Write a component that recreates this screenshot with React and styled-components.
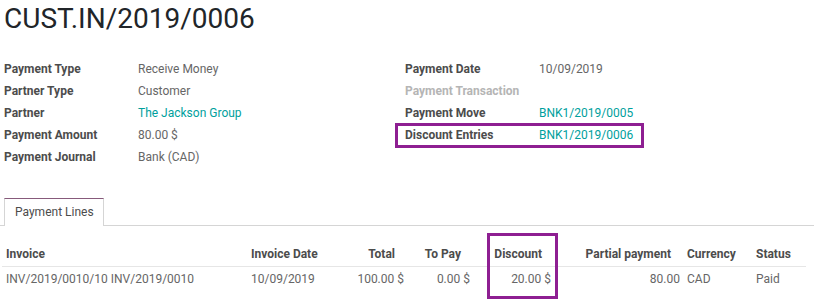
import React from 'react';
import styled, { createGlobalStyle } from 'styled-components';

const GlobalStyle = createGlobalStyle`
  body {
    margin: 0;
    background: #ffffff;
    font-family: Roboto, "Liberation Sans", sans-serif;
    font-size: 12px;
    color: #666666;
  }
`;

const leftFields = [
  { label: 'Payment Type', value: 'Receive Money' },
  { label: 'Partner Type', value: 'Customer' },
  { label: 'Partner', value: 'The Jackson Group', link: true },
  { label: 'Payment Amount', value: '80.00 $' },
  { label: 'Payment Journal', value: 'Bank (CAD)' },
];

const rightFields = [
  { label: 'Payment Date', value: '10/09/2019' },
  { label: 'Payment Transaction', value: '', empty: true },
  { label: 'Payment Move', value: 'BNK1/2019/0005', link: true },
  { label: 'Discount Entries', value: 'BNK1/2019/0006', link: true, marked: true },
];

const columns = [
  { title: 'Invoice', value: 'INV/2019/0010/10 INV/2019/0010' },
  { title: 'Invoice Date', value: '10/09/2019' },
  { title: 'Total', value: '100.00 $', num: true },
  { title: 'To Pay', value: '0.00 $', num: true },
  { title: 'Discount', value: '20.00 $', num: true, marked: true },
  { title: 'Partial payment', value: '80.00', num: true },
  { title: 'Currency', value: 'CAD', tight: true },
  { title: 'Status', value: 'Paid' },
];

function FieldGroup({ fields }) {
  return (
    <Group>
      {fields.map((f) => (
        <FieldRow key={f.label} $marked={f.marked}>
          <Label $empty={f.empty}>{f.label}</Label>
          <Value $link={f.link}>{f.value}</Value>
        </FieldRow>
      ))}
    </Group>
  );
}

export default function App() {
  return (
    <Sheet>
      <GlobalStyle />
      <Title>CUST.IN/2019/0006</Title>
      <Fields>
        <FieldGroup fields={leftFields} />
        <FieldGroup fields={rightFields} />
      </Fields>
      <Tabs>
        <Tab>Payment Lines</Tab>
      </Tabs>
      <Table>
        <HeadRow>
          {columns.map((c) => (
            <HeadCell key={c.title} $num={c.num} $tight={c.tight} $marked={c.marked}>
              {c.title}
            </HeadCell>
          ))}
        </HeadRow>
        <BodyRow>
          {columns.map((c) => (
            <Cell key={c.title} $num={c.num} $tight={c.tight}>
              {c.value}
            </Cell>
          ))}
        </BodyRow>
      </Table>
    </Sheet>
  );
}

const Sheet = styled.div`
  width: 814px;
  height: 308px;
  overflow: hidden;
`;

const Title = styled.h1`
  margin: 2px 0 0 4px;
  font-size: 28px;
  font-weight: 400;
  line-height: 1.2;
  color: #212529;
`;

const Fields = styled.div`
  display: grid;
  grid-template-columns: 401px 1fr;
  padding-left: 4px;
  margin-top: 22px;
`;

const Group = styled.div`
  display: flex;
  flex-direction: column;
`;

const FieldRow = styled.div`
  position: relative;
  display: grid;
  grid-template-columns: 134px 1fr;
  height: 22px;
  line-height: 22px;
  ${(p) =>
    p.$marked &&
    `
    &::after {
      content: '';
      position: absolute;
      left: -10px;
      top: -1px;
      width: 249px;
      height: 25px;
      box-sizing: border-box;
      border: 3px solid #8e1f92;
    }
  `}
`;

const Label = styled.div`
  font-weight: 700;
  color: ${(p) => (p.$empty ? '#b5b5b5' : '#4c4c4c')};
`;

const Value = styled.div`
  color: ${(p) => (p.$link ? '#00a09d' : '#666666')};
`;

const Tabs = styled.div`
  display: flex;
  margin-top: 30px;
  padding-left: 4px;
  border-bottom: 1px solid #d5d5d5;
  height: 27px;
`;

const Tab = styled.div`
  display: flex;
  align-items: center;
  padding: 0 9px 0 10px;
  box-sizing: border-box;
  background: #ffffff;
  border: 1px solid #d5d5d5;
  border-top: 1px solid #875a7b;
  border-bottom: none;
  margin-bottom: -1px;
  height: 28px;
  color: #4c4c4c;
`;

const Table = styled.div`
  margin: 16px 0 0 2px;
  width: 804px;
`;

const gridCols = '245px 93px 68px 66px 81px 129px 68px 54px';

const HeadRow = styled.div`
  display: grid;
  grid-template-columns: ${gridCols};
  height: 24px;
  border-bottom: 1px solid #e6e6e6;
`;

const BodyRow = styled.div`
  display: grid;
  grid-template-columns: ${gridCols};
  height: 24px;
`;

const HeadCell = styled.div`
  position: relative;
  line-height: 24px;
  font-weight: 700;
  color: #4c4c4c;
  white-space: nowrap;
  text-align: ${(p) => (p.$num ? 'right' : 'left')};
  padding: ${(p) => (p.$num ? '0 13px 0 4px' : p.$tight ? '0 4px 0 3px' : '0 4px')};
  ${(p) =>
    p.$marked &&
    `
    &::after {
      content: '';
      position: absolute;
      left: 13px;
      top: -9px;
      width: 71px;
      height: 66px;
      box-sizing: border-box;
      border: 3px solid #8e1f92;
    }
  `}
`;

const Cell = styled.div`
  line-height: 24px;
  white-space: nowrap;
  color: #666666;
  text-align: ${(p) => (p.$num ? 'right' : 'left')};
  padding: ${(p) => (p.$tight ? '0 4px 0 3px' : '0 4px')};
`;
